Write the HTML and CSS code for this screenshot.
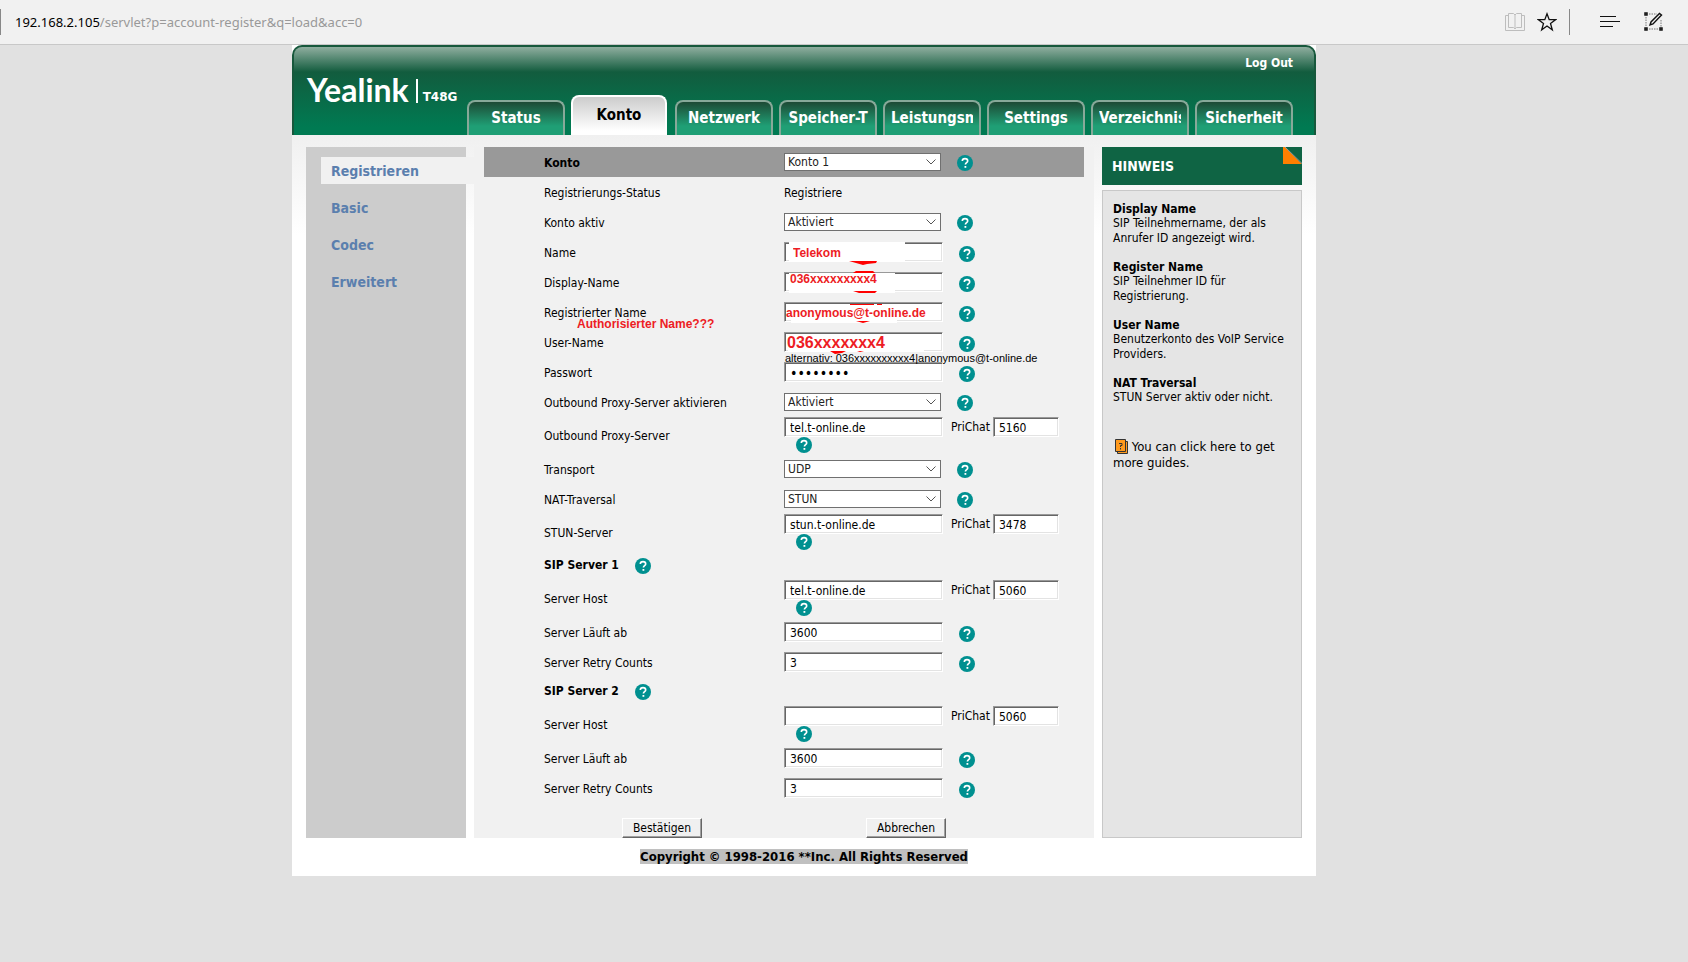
FILE: index.html
```html
<!DOCTYPE html>
<html lang="de">
<head>
<meta charset="utf-8">
<title>Yealink T48G</title>
<link rel="stylesheet" href="styles.css">
</head>
<body>
<svg class="defs" aria-hidden="true">
  <symbol id="help" viewBox="0 0 16 16"><circle cx="8" cy="8" r="8" fill="#009090"/><path d="M5.3 6.1C5.3 4.3 6.5 3.6 8 3.6s2.7.9 2.7 2.3c0 1.7-2.3 1.9-2.3 3.6" fill="none" stroke="#fff" stroke-width="1.6"/><rect x="7.5" y="11" width="1.8" height="1.8" fill="#fff"/></symbol>
  <symbol id="chev" viewBox="0 0 10 6"><path d="M.5.5 5 5 9.5.5" fill="none" stroke="#555"/></symbol>
</svg>

<div class="toolbar">
  <div class="address"><span class="host">192.168.2.105</span>/servlet?p=account-register&amp;q=load&amp;acc=0</div>
  <button class="tool book" aria-label="Leseansicht"><svg width="20" height="20" viewBox="0 0 20 20" fill="none" stroke="#bdbdbd"><path d="M3.500 15.500V1.500H8.500L10 3V17L8.500 15.500ZM16.500 15.500V1.500H11.500L10 3M10 17l1.500-1.500H16.500"/><path d="M3 3.500H.500V18.500H19.500V3.500H17"/></svg></button>
  <button class="tool star" aria-label="Favorit"><svg width="20" height="20" viewBox="0 0 20 20" fill="none" stroke="#111" stroke-width="1.300"><path d="M10 1.800 12.200 7.700H18.500L13.500 11.500 15.300 17.800 10 14 4.700 17.800 6.500 11.500 1.500 7.700H7.800Z"/></svg></button>
  <span class="rule"></span>
  <button class="tool hub" aria-label="Hub"><svg width="20" height="20" viewBox="0 0 20 20" stroke="#111"><path d="M0 4.500h16M0 9.500h20M0 14.500h13"/></svg></button>
  <button class="tool note" aria-label="Webseitennotiz"><svg width="20" height="20" viewBox="0 0 20 20" fill="none" stroke="#111"><path d="M1 1h2v2H1zM1 16h2v2H1zM16 16h2v2h-2z" stroke-width="1.500"/><path d="M5 2h8M2 5v10M5 17h10M17 8v7" stroke="#777" stroke-dasharray="1.500 1"/><path d="M6 13l1-3 8.500-8.500 2 1.500L9 12z" stroke-width="1.400"/></svg></button>
</div>

<div class="page">
  <header class="head">
    <a class="logout" href="#">Log Out</a>
    <div class="bar">
      <div class="brand"><span class="logo">Yealink</span><span class="model">T48G</span></div>
      <nav class="tabs">
        <a href="#"><span>Status</span></a>
        <a href="#" class="on"><span>Konto</span></a>
        <a href="#"><span>Netzwerk</span></a>
        <a href="#"><span>Speicher-T</span></a>
        <a href="#"><span>Leistungsm</span></a>
        <a href="#"><span>Settings</span></a>
        <a href="#"><span>Verzeichnis</span></a>
        <a href="#"><span>Sicherheit</span></a>
      </nav>
    </div>
  </header>

  <div class="cols">
    <nav class="side">
      <a href="#" class="on">Registrieren</a>
      <a href="#">Basic</a>
      <a href="#">Codec</a>
      <a href="#">Erweitert</a>
    </nav>

    <form class="main">
      <div class="row title"><label for="f1">Konto</label><div class="field"><span class="sel"><select id="f1"><option>Konto 1</option></select><svg><use href="#chev"/></svg></span><button type="button" class="help" aria-label="Hilfe"><svg><use href="#help"/></svg></button></div></div>
      <div class="row"><span class="label">Registrierungs-Status</span><div class="field"><span class="label">Registriere</span></div></div>
      <div class="row"><label for="f2">Konto aktiv</label><div class="field"><span class="sel"><select id="f2"><option>Aktiviert</option></select><svg><use href="#chev"/></svg></span><button type="button" class="help" aria-label="Hilfe"><svg><use href="#help"/></svg></button></div></div>
      <div class="row"><label for="f3">Name</label><div class="field"><span class="box"><svg class="ink" viewBox="0 0 159 30"><path d="M5 5h116v20H5z" fill="#fff"/><path d="M65 24h28l-1 2-9 1-4 1-7-2z" fill="#f00"/></svg><input id="f3" class="red name" value="Telekom"></span><button type="button" class="help" aria-label="Hilfe"><svg><use href="#help"/></svg></button></div></div>
      <div class="row"><label for="f4">Display-Name</label><div class="field"><span class="box"><svg class="ink" viewBox="0 0 159 30"><path d="M5 6h106v20H5z" fill="#fff"/><path d="M69 6l3-2h17l2 2zM69 24h24l-2 2H75z" fill="#f00"/></svg><input id="f4" class="red disp" value="036xxxxxxxxx4"></span><button type="button" class="help" aria-label="Hilfe"><svg><use href="#help"/></svg></button></div></div>
      <div class="row"><label for="f5">Registrierter Name</label><span class="remark">Authorisierter Name???</span><div class="field"><span class="box"><svg class="ink" viewBox="0 0 159 30"><path d="M7 8h106v18H7z" fill="#fff"/><path d="M66 7h24v1H66zM93 7h5v1h-5zM72 24h14l-7 2z" fill="#f00"/></svg><input id="f5" class="red reg" value="anonymous@t-online.de"></span><button type="button" class="help" aria-label="Hilfe"><svg><use href="#help"/></svg></button></div></div>
      <div class="row"><label for="f6">User-Name</label><div class="field"><span class="box"><svg class="ink" viewBox="0 0 159 30"><path d="M4 8h136v17H4z" fill="#fff"/><path d="M46 24h16l-4 2-7 1zM73 24h7l-4 1z" fill="#f00"/></svg><input id="f6" class="red user" value="036xxxxxxx4"></span><button type="button" class="help" aria-label="Hilfe"><svg><use href="#help"/></svg></button></div></div>
      <div class="row"><label for="f7">Passwort</label><div class="field"><span class="alt">alternativ: 036xxxxxxxxxx4|anonymous@t-online.de</span><span class="box"><input id="f7" class="pass" type="password" value="12345678"></span><button type="button" class="help" aria-label="Hilfe"><svg><use href="#help"/></svg></button></div></div>
      <div class="row"><label for="f8">Outbound Proxy-Server aktivieren</label><div class="field"><span class="sel"><select id="f8"><option>Aktiviert</option></select><svg><use href="#chev"/></svg></span><button type="button" class="help" aria-label="Hilfe"><svg><use href="#help"/></svg></button></div></div>
      <div class="row tall"><label for="f9">Outbound Proxy-Server</label><div class="field"><span class="box"><input id="f9" value="tel.t-online.de"></span><label class="port" for="p9">PriChat</label><span class="box short"><input id="p9" value="5160"></span><button type="button" class="help" aria-label="Hilfe"><svg><use href="#help"/></svg></button></div></div>
      <div class="row"><label for="f10">Transport</label><div class="field"><span class="sel"><select id="f10"><option>UDP</option></select><svg><use href="#chev"/></svg></span><button type="button" class="help" aria-label="Hilfe"><svg><use href="#help"/></svg></button></div></div>
      <div class="row"><label for="f11">NAT-Traversal</label><div class="field"><span class="sel"><select id="f11"><option>STUN</option></select><svg><use href="#chev"/></svg></span><button type="button" class="help" aria-label="Hilfe"><svg><use href="#help"/></svg></button></div></div>
      <div class="row tall"><label for="f12">STUN-Server</label><div class="field"><span class="box"><input id="f12" value="stun.t-online.de"></span><label class="port" for="p12">PriChat</label><span class="box short"><input id="p12" value="3478"></span><button type="button" class="help" aria-label="Hilfe"><svg><use href="#help"/></svg></button></div></div>
      <div class="row group"><strong>SIP Server 1</strong><button type="button" class="help" aria-label="Hilfe"><svg><use href="#help"/></svg></button></div>
      <div class="row tall"><label for="f13">Server Host</label><div class="field"><span class="box"><input id="f13" value="tel.t-online.de"></span><label class="port" for="p13">PriChat</label><span class="box short"><input id="p13" value="5060"></span><button type="button" class="help" aria-label="Hilfe"><svg><use href="#help"/></svg></button></div></div>
      <div class="row"><label for="f14">Server Läuft ab</label><div class="field"><span class="box"><input id="f14" value="3600"></span><button type="button" class="help" aria-label="Hilfe"><svg><use href="#help"/></svg></button></div></div>
      <div class="row"><label for="f15">Server Retry Counts</label><div class="field"><span class="box"><input id="f15" value="3"></span><button type="button" class="help" aria-label="Hilfe"><svg><use href="#help"/></svg></button></div></div>
      <div class="row group"><strong>SIP Server 2</strong><button type="button" class="help" aria-label="Hilfe"><svg><use href="#help"/></svg></button></div>
      <div class="row tall"><label for="f16">Server Host</label><div class="field"><span class="box"><input id="f16" value=""></span><label class="port" for="p16">PriChat</label><span class="box short"><input id="p16" value="5060"></span><button type="button" class="help" aria-label="Hilfe"><svg><use href="#help"/></svg></button></div></div>
      <div class="row"><label for="f17">Server Läuft ab</label><div class="field"><span class="box"><input id="f17" value="3600"></span><button type="button" class="help" aria-label="Hilfe"><svg><use href="#help"/></svg></button></div></div>
      <div class="row"><label for="f18">Server Retry Counts</label><div class="field"><span class="box"><input id="f18" value="3"></span><button type="button" class="help" aria-label="Hilfe"><svg><use href="#help"/></svg></button></div></div>
      <div class="actions"><button type="button" class="btn">Bestätigen</button><button type="button" class="btn">Abbrechen</button></div>
    </form>

    <aside class="hint">
      <h2>HINWEIS<svg width="19" height="17" viewBox="0 0 19 17"><path d="M0 0h2L19 17H0z" fill="#ff7f00"/><path d="M2 0l17 17V0z" fill="#0f6444"/><path d="M2 0l17 16.500" stroke="#999"/></svg></h2>
      <div class="notes">
        <dl>
          <dt>Display Name</dt><dd>SIP Teilnehmername, der als Anrufer ID angezeigt wird.</dd>
          <dt>Register Name</dt><dd>SIP Teilnehmer ID für Registrierung.</dd>
          <dt>User Name</dt><dd>Benutzerkonto des VoIP Service Providers.</dd>
          <dt>NAT Traversal</dt><dd>STUN Server aktiv oder nicht.</dd>
        </dl>
        <a class="guide" href="#"><svg width="13" height="15" viewBox="0 0 13 15"><path d="M2.500 2.500h10v12h-10z" fill="#ff9a1e" stroke="#333"/><path d="M.500.500h10v12H.500z" fill="#ff9a1e" stroke="#333"/><path d="M4 4.500h3v2H5.500V8M5.500 9v1.500" fill="none" stroke="#333"/></svg> You can click here to get more guides.</a>
      </div>
    </aside>
  </div>
  <footer><span>Copyright © 1998-2016 **Inc. All Rights Reserved</span></footer>
</div>
</body>
</html>
```
FILE: styles.css
```css
* { box-sizing: border-box; }
body { margin: 0; background: #e1e1e1; color: #000; font: 12px/15px "DejaVu Sans Condensed", Tahoma, sans-serif; }
a { color: inherit; text-decoration: none; }
button { font: inherit; color: inherit; }
.defs { position: absolute; width: 0; height: 0; }

.toolbar { display: flex; align-items: center; height: 45px; padding: 0 24px 0 0; background: #f1f1f1; border-bottom: 1px solid #c8c8c8; }
.toolbar::before { content: ""; width: 1px; height: 26px; margin-right: 14px; background: #888; }
.address { flex: 1; color: #999; font: 13px/18px "Noto Sans", sans-serif; }
.host { color: #000; }
.tool { padding: 0; border: 0; background: none; width: 20px; height: 20px; }
.tool svg, .help svg { display: block; }
.star { margin-left: 12px; }
.rule { width: 1px; height: 26px; margin: 0 30px 0 12px; background: #888; }
.note { margin-left: 24px; }

.page { max-width: 1024px; margin: 0 auto; background: #fff linear-gradient(#f0f0f0, #fff) 0 90px / 100% 100px no-repeat; }
@media (min-width: 1200px) { .page { margin-left: calc(50% - 552px); } }
.head { display: flex; flex-direction: column; justify-content: space-between; height: 90px; padding: 9px 21px 0 13px; border: 2px solid #17583c; border-width: 2px 2px 0; border-radius: 10px 10px 0 0; background: linear-gradient(#8fae9f, #125c3e 25px, #007a52 80px); }
.logout { align-self: flex-end; color: #fff; font-weight: bold; }
.bar { display: flex; align-items: flex-end; }
.brand { display: flex; align-items: flex-end; flex: 1; height: 56px; padding-bottom: 32px; color: #fff; }
.logo { font: bold 32px/22px Lato, sans-serif; padding-right: 7px; height: 24px; border-right: 2px solid #fff; }
.model { padding-left: 5px; font: bold 12px/12px "DejaVu Sans", Verdana, sans-serif; }
.tabs { display: flex; align-items: flex-end; gap: 6px; }
.tabs a { width: 98px; height: 35px; padding: 0 6px; border: 2px solid #87a999; border-bottom: 0; border-radius: 8px 8px 0 0; background: linear-gradient(#1d4a35, #1f9f75 24px); color: #fff; font-weight: bold; font-size: 15px; line-height: 33px; text-align: center; }
.tabs span { display: block; overflow: hidden; white-space: nowrap; }
.tabs .on { width: 96px; height: 40px; margin-right: 2px; border-color: #fff; background: linear-gradient(#ccc, #fff 34px); color: #000; line-height: 36px; }

.cols { display: flex; gap: 8px; padding: 12px 14px 0; }
.side { display: flex; flex-direction: column; gap: 10px; width: 160px; padding: 10px 0 0 15px; background: #ccc; }
.side a { height: 27px; padding-left: 10px; margin-right: -8px; color: #5b7fae; font-weight: bold; font-size: 14px; line-height: 29px; }
.side .on { background: #f1f1f1; }
.main { flex: 1; padding: 0 10px; background: #f1f1f1; }
.row { position: relative; display: flex; align-items: center; height: 30px; padding-left: 60px; }
.row > label, .label { width: 240px; padding-top: 2px; }
.title { background: #999; }
.title label, .group strong { font-weight: bold; }
.field { position: relative; display: flex; align-items: center; }
.tall { height: 37px; }
.tall .field { flex-wrap: wrap; align-self: flex-start; width: 280px; }
.group { height: 29px; }
.help { width: 16px; height: 16px; padding: 0; border: 0; background: none; margin: 3px 0 0 16px; }
.help svg { width: 16px; height: 16px; }
.sel + .help { margin-top: 2px; }
.tall .help { margin: 0 0 0 12px; }
.group .help { margin-top: 0; }
.sel { position: relative; display: block; width: 157px; }
.sel select { appearance: none; display: block; width: 100%; height: 18px; padding: 1px 3px 0; border: 1px solid #707070; border-radius: 0; background: #fff; color: #222; font: inherit; line-height: 15px; }
.sel svg { position: absolute; right: 5px; top: 6px; width: 10px; height: 6px; pointer-events: none; }
.box { position: relative; display: block; width: 159px; height: 20px; border: 1px solid; border-color: #999 #fff #fff #999; box-shadow: inset 1px 1px #666, inset -1px -1px #e3e3e3; background: #fff; }
.box input { position: relative; display: block; width: 100%; height: 100%; padding: 1px 4px 0 5px; border: 0; background: none; color: #000; font: inherit; }
.box.short { width: 66px; }
.port { width: 42px; margin-left: 8px; padding-top: 1px; }
.ink { position: absolute; left: -1px; top: -6px; width: 159px; height: 30px; }
.box .red { color: #ed1c24; font: bold 12px "Liberation Sans", Arial, sans-serif; }
.box .name { padding-left: 8px; }
.box .disp { padding: 0 0 6px 5px; }
.box .reg { padding-left: 1px; }
.box .user { padding-left: 2px; font-size: 16px; }
.box .pass { font-size: 14px; }
.remark { position: absolute; left: 93px; top: 19px; color: #ed1c24; font: bold 12px/16px "Liberation Sans", Arial, sans-serif; }
.alt { position: absolute; left: 1px; top: -10px; font: 11px/13px "Liberation Sans", Arial, sans-serif; white-space: nowrap; z-index: 1; }
.actions { display: flex; gap: 164px; padding: 15px 0 0 138px; }
.btn { width: 80px; height: 20px; padding: 1px 0 0; border: 1px solid; border-color: #fff #666 #666 #fff; box-shadow: inset -1px -1px #a0a0a0; background: #f0f0f0; line-height: 15px; }

.hint { display: flex; flex-direction: column; gap: 5px; width: 200px; }
.hint h2 { position: relative; margin: 0; padding: 0 10px; background: #0f6444; color: #fff; font-size: 14px; line-height: 38px; }
.hint h2 svg { position: absolute; right: 0; top: 0; }
.notes { flex: 1; padding: 11px 10px; border: 1px solid #c8c8c8; background: #e5e5e5; }
dl { margin: 0 0 34px; }
dt { font-weight: bold; line-height: 14px; }
dd { margin: 0 0 14px; }
.guide { display: block; font-size: 13px; line-height: 16px; }
.guide svg { margin-left: 2px; vertical-align: -3px; }
footer { padding: 11px 0; text-align: center; font-weight: bold; font-size: 13px; line-height: 16px; }
footer span { background: #c0c0c0; }
```
